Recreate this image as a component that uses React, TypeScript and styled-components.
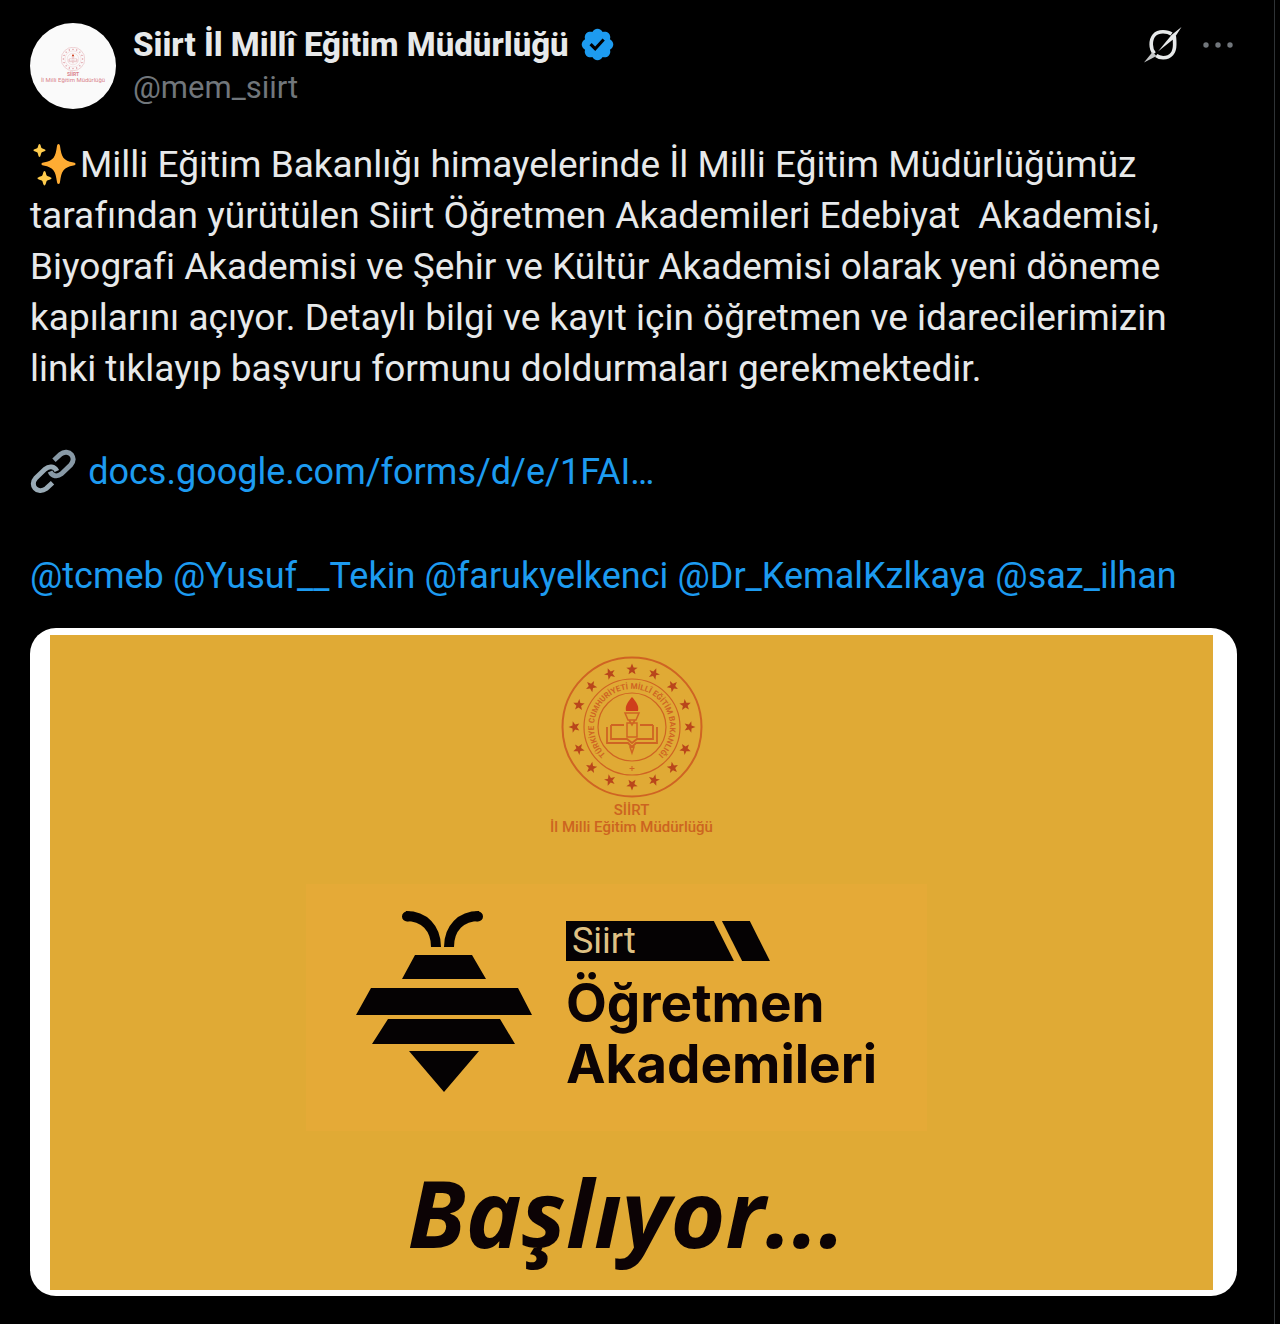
import React from "react";
import styled, { createGlobalStyle } from "styled-components";

const GlobalStyle = createGlobalStyle`
  * { box-sizing: border-box; }
  html { background: #000; }
  body { margin: 0; background: #000; font-family: Roboto, "Liberation Sans", sans-serif; }
`;

const Timeline = styled.main`
  min-height: 100vh;
  margin-right: 5px;
  border-right: 1px solid #2f3336;
  background: #000;
`;

const Post = styled.article`
  padding: 23px 37px 28px 30px;
  color: #e7e9ea;
`;

const Header = styled.header`
  display: flex;
  align-items: flex-start;
  gap: 17px;
`;

const Avatar = styled.a`
  display: flex;
  flex-direction: column;
  align-items: center;
  flex: none;
  width: 86px;
  height: 86px;
  padding-top: 24px;
  overflow: hidden;
  border-radius: 50%;
  background: #fafafa;
  color: #d9828a;
  text-decoration: none;
`;

const AvatarText = styled.span<{ $strong?: boolean }>`
  font-size: ${(p) => (p.$strong ? 5 : 6)}px;
  line-height: 6px;
  font-weight: ${(p) => (p.$strong ? 700 : 400)};
  white-space: nowrap;
`;

const Names = styled.div`
  flex: 1;
  min-width: 0;
`;

const NameRow = styled.div`
  display: flex;
  align-items: center;
  gap: 10px;
  height: 43px;
`;

const Name = styled.a`
  color: #e7e9ea;
  font-size: 33px;
  line-height: 43px;
  font-weight: 800;
  text-decoration: none;
  white-space: nowrap;
`;

const Handle = styled.a`
  display: block;
  color: #71767b;
  font-size: 31px;
  line-height: 43px;
  text-decoration: none;
`;

const Actions = styled.div`
  display: flex;
  align-items: center;
  gap: 20px;
  height: 43px;
  padding-right: 3px;
`;

const IconButton = styled.button`
  display: flex;
  padding: 0;
  border: 0;
  background: none;
  color: #e7e9ea;
  cursor: pointer;
`;

const Body = styled.div`
  margin-top: 30px;
  font-size: 37px;
  line-height: 51px;
`;

const Paragraph = styled.p`
  margin: 0 0 52px;
  white-space: pre-wrap;

  &:last-child { margin-bottom: 0; }
`;

const TextLink = styled.a`
  color: #1d9bf0;
  font-size: 36px;
  text-decoration: none;
`;

const Emoji = styled.svg<{ $gap: number }>`
  width: 46px;
  height: 46px;
  margin-right: ${(p) => p.$gap}px;
  vertical-align: -10px;
`;

const Media = styled.figure`
  margin: 26px 0 0;
  padding: 7px 24px 6px 20px;
  border-radius: 26px;
  background: #fff;
`;

const Poster = styled.div`
  display: flex;
  flex-direction: column;
  align-items: center;
  padding-top: 21px;
  background: #e0aa35;
  color: #0c0305;
`;

const EmblemCaption = styled.div`
  margin-top: 4px;
  color: #cc6420;
  font-size: 15px;
  line-height: 17px;
  font-weight: 500;
  text-align: center;
`;

const Lockup = styled.div`
  display: flex;
  gap: 34px;
  margin: 48px 30px 0 0;
  padding: 25px 50px 36px;
  background: #e5aa37;
`;

const LockupText = styled.div`
  display: flex;
  flex-direction: column;
  padding-top: 12px;
`;

const Ribbon = styled.div`
  display: flex;
  width: 204px;
  height: 40px;
`;

const RibbonMain = styled.div`
  flex: 1;
  padding-left: 6px;
  background: #050203;
  clip-path: polygon(0 0, 88% 0, 100% 100%, 0 100%);
  color: #dfc184;
  font-size: 36px;
  line-height: 40px;
`;

const RibbonTail = styled.div`
  width: 48px;
  margin-left: -12px;
  background: #050203;
  clip-path: polygon(0 0, 58% 0, 100% 100%, 42% 100%);
`;

const LockupTitle = styled.div`
  margin-top: 12px;
  font-family: Inter, sans-serif;
  font-size: 53px;
  line-height: 61px;
  font-weight: 700;
`;

const Starting = styled.div`
  margin-right: 10px;
  padding: 17px 0 14px;
  font-family: "Open Sans", sans-serif;
  font-size: 94px;
  line-height: 128px;
  font-style: italic;
  font-weight: 700;
`;

const STAR = "M0-6 1.600-2 5.700-1.800 2.400.6 3.500 4.800 0 2.400-3.500 4.800-2.400.6-5.700-1.800-1.600-2Z";

function Emblem({ size, color, detailed }: { size: number; color: string; detailed?: boolean }) {
  return (
    <svg width={size} height={size} viewBox="-71 -71 142 142" fill="none" stroke={color} aria-hidden="true">
      <circle r="69.500" strokeWidth="2" />
      <circle r="48" strokeWidth="1.200" />
      <circle r="34" strokeWidth="1.200" />
      {Array.from({ length: 16 }, (_, i) => (
        <path key={i} d={STAR} fill={detailed ? "#b9461b" : color} stroke="none" transform={`rotate(${i * 22.5}) translate(0 -57.500)`} />
      ))}
      {detailed && (
        <>
          <path id="emblemRing" d="M-13.500 35.500A38 38 0 1 1 13.500 35.500" stroke="none" />
          <text fill={color} stroke="none" fontSize="8" fontWeight="700">
            <textPath href="#emblemRing" startOffset="50%" textAnchor="middle">
              TÜRKİYE CUMHURİYETİ MİLLÎ EĞİTİM BAKANLIĞI
            </textPath>
          </text>
          <path d="M0 39v5M-2.500 41.500h5" strokeWidth="1" />
        </>
      )}
      <path d="M-25 0v16H-4l4 4 4-4h21V0M-21-2v14h16l5 4 5-4h16V-2M-21-2h13M21-2H8" strokeWidth="1.800" />
      <path d="M-5-4h10v14H-5zM-7-14H7L4-7h-8zM-3-7l3 5 3-5M-2 20l2 6 2-6z" strokeWidth="1.500" />
      <path d="M0-30c5 6 7 9 6 14H-6c-1-5 1-8 6-14Z" fill="#cf3f1c" stroke="none" />
    </svg>
  );
}

function VerifiedBadge() {
  return (
    <svg width="37" height="37" viewBox="0 0 22 22" role="img" aria-label="Doğrulanmış hesap">
      <path
        fill="#1d9bf0"
        d="M20.396 11c-.018-.646-.215-1.275-.57-1.816-.354-.54-.852-.972-1.438-1.246.223-.607.27-1.264.14-1.897-.131-.634-.437-1.218-.882-1.687-.47-.445-1.053-.75-1.687-.882-.633-.13-1.29-.083-1.897.14-.273-.587-.704-1.086-1.245-1.44S11.647 1.62 11 1.604c-.646.017-1.273.213-1.813.568s-.969.854-1.24 1.44c-.608-.223-1.267-.272-1.902-.14-.635.13-1.22.436-1.69.882-.445.47-.749 1.055-.878 1.688-.13.633-.08 1.29.144 1.896-.587.274-1.087.705-1.443 1.245-.356.54-.555 1.17-.574 1.817.02.647.218 1.276.574 1.817.356.54.856.972 1.443 1.245-.224.606-.274 1.263-.144 1.896.13.634.433 1.218.877 1.688.47.443 1.054.747 1.687.878.633.132 1.29.084 1.897-.136.274.586.705 1.084 1.246 1.439.54.354 1.17.551 1.816.569.647-.016 1.276-.213 1.817-.567s.972-.854 1.245-1.44c.604.239 1.266.296 1.903.164.636-.132 1.22-.447 1.68-.907.46-.46.776-1.044.908-1.681s.075-1.299-.165-1.903c.586-.274 1.084-.705 1.439-1.246.354-.54.551-1.17.569-1.816zM9.662 14.850l-3.429-3.428 1.293-1.302 2.072 2.072 4.400-4.794 1.347 1.246z"
      />
    </svg>
  );
}

function GrokIcon() {
  return (
    <svg width="38" height="36" viewBox="0 0 38 36" fill="none" aria-hidden="true">
      <path d="M27.500 7C25 5.200 22.500 4.800 19 4.800 11 4.800 7.200 10 7.200 17.500c0 4 .8 6.300 3.200 9" stroke="#e7e9ea" strokeWidth="3.600" />
      <path d="M30.200 9c.5 2.500.5 5 .5 8.500 0 8-4 13.200-11.500 13.200-2.800 0-5-.6-7-2.200" stroke="#e7e9ea" strokeWidth="3.600" />
      <path d="M37.500 0 32 8.500 29 12.500 14 24.500 27.500 8Z" fill="#e7e9ea" />
      <path d="M0 35.500 8.500 25l4 4Z" fill="#c4c6c7" />
    </svg>
  );
}

function MoreIcon() {
  return (
    <svg width="32" height="8" viewBox="0 0 32 8" fill="#71767b" aria-hidden="true">
      <circle cx="4" cy="4" r="2.700" />
      <circle cx="16" cy="4" r="2.700" />
      <circle cx="28" cy="4" r="2.700" />
    </svg>
  );
}

function Sparkles() {
  return (
    <Emoji $gap={4} viewBox="0 0 46 46" role="img" aria-label="Işıltı">
      <path fill="#ffac33" d="M28.500 3c1 0 1.300 1 1.500 2 1.600 11 3 14.500 13.500 16.500 1.500.3 2 .8 2 1.500s-.5 1.200-2 1.500C33 26.500 31.600 30 30 41c-.2 1-.5 2-1.500 2s-1.300-1-1.500-2c-1.600-11-3-14.500-13.500-16.500-1.500-.3-2-.8-2-1.500s.5-1.200 2-1.500C24 19.500 25.400 16 27 5c.2-1 .5-2 1.500-2Z" />
      <path fill="#ffcc4d" d="M9.500 3c1.200 0 1.400 3.300 2.100 4.100s3.900 1 3.900 2.200-3.200 1.400-3.900 2.200-.9 4.500-2.100 4.500-1.400-3.700-2.100-4.500-3.900-1-3.900-2.200 3.200-1.400 3.900-2.200S8.300 3 9.500 3ZM14.500 30c1.300 0 1.600 3.900 2.400 4.800s4.600 1.200 4.600 2.500-3.800 1.600-4.600 2.500-1.100 4.700-2.400 4.700-1.600-3.800-2.400-4.700-4.600-1.200-4.600-2.500 3.800-1.600 4.600-2.500 1.100-4.800 2.400-4.800Z" />
    </Emoji>
  );
}

function ChainLink() {
  return (
    <Emoji $gap={3} viewBox="0 0 47 47" role="img" aria-label="Bağlantı" fill="none" strokeWidth="5">
      <path d="M24.500 12.500 31 6.500C35 3 40 4 42.500 7c2.500 3.500 2 7-1 10.500L32 26.500c-4 3.200-9.500 2.500-11.500-2.500" stroke="#8899a6" />
      <path d="M23 35.500 16.500 41.500C12.500 44.500 7.500 44 5 41c-2.500-3.500-2-7 1-10.500L15.500 21.500c4-3.500 9.500-3 12 2" stroke="#99aab5" />
    </Emoji>
  );
}

function Bee() {
  return (
    <svg width="176" height="184" viewBox="0 0 176 184" aria-hidden="true">
      <g fill="none" stroke="#050203" strokeWidth="10">
        <path d="M50 7c18 0 30 12 30 31M123 7C105 7 93 19 93 38" strokeLinecap="butt" />
        <path d="M52 7.500h-1M121 7.500h1" strokeLinecap="round" />
      </g>
      <path fill="#050203" d="M59 46h57l14 24H46ZM15 79h147l14 27H0ZM32 110h112l15 25H16ZM53 142h70l-35 41Z" />
    </svg>
  );
}

const mentions = ["tcmeb", "Yusuf__Tekin", "farukyelkenci", "Dr_KemalKzlkaya", "saz_ilhan"];

const announcement = [
  "Milli Eğitim Bakanlığı himayelerinde İl Milli Eğitim Müdürlüğümüz",
  "tarafından yürütülen Siirt Öğretmen Akademileri Edebiyat  Akademisi,",
  "Biyografi Akademisi ve Şehir ve Kültür Akademisi olarak yeni döneme",
  "kapılarını açıyor. Detaylı bilgi ve kayıt için öğretmen ve idarecilerimizin",
  "linki tıklayıp başvuru formunu doldurmaları gerekmektedir.",
].join("\n");

export default function App() {
  return (
    <Timeline>
      <GlobalStyle />
      <Post lang="tr">
        <Header>
          <Avatar href="#profil">
            <Emblem size={24} color="#d9828a" />
            <AvatarText $strong>SİİRT</AvatarText>
            <AvatarText>İl Milli Eğitim Müdürlüğü</AvatarText>
          </Avatar>
          <Names>
            <NameRow>
              <Name href="#profil">Siirt İl Millî Eğitim Müdürlüğü</Name>
              <VerifiedBadge />
            </NameRow>
            <Handle href="#profil">@mem_siirt</Handle>
          </Names>
          <Actions>
            <IconButton type="button" aria-label="Grok"><GrokIcon /></IconButton>
            <IconButton type="button" aria-label="Daha fazla"><MoreIcon /></IconButton>
          </Actions>
        </Header>

        <Body>
          <Paragraph><Sparkles />{announcement}</Paragraph>
          <Paragraph>
            <ChainLink /> <TextLink href="#form">docs.google.com/forms/d/e/1FAI…</TextLink>
          </Paragraph>
          <Paragraph>
            {mentions.map((m, i) => (
              <React.Fragment key={m}>
                {i > 0 && " "}
                <TextLink href={`#${m}`}>@{m}</TextLink>
              </React.Fragment>
            ))}
          </Paragraph>
        </Body>

        <Media>
          <Poster>
            <Emblem size={142} color="#cf6423" detailed />
            <EmblemCaption>SİİRT<br />İl Milli Eğitim Müdürlüğü</EmblemCaption>
            <Lockup>
              <Bee />
              <LockupText>
                <Ribbon>
                  <RibbonMain>Siirt</RibbonMain>
                  <RibbonTail />
                </Ribbon>
                <LockupTitle>Öğretmen<br />Akademileri</LockupTitle>
              </LockupText>
            </Lockup>
            <Starting>Başlıyor...</Starting>
          </Poster>
        </Media>
      </Post>
    </Timeline>
  );
}
